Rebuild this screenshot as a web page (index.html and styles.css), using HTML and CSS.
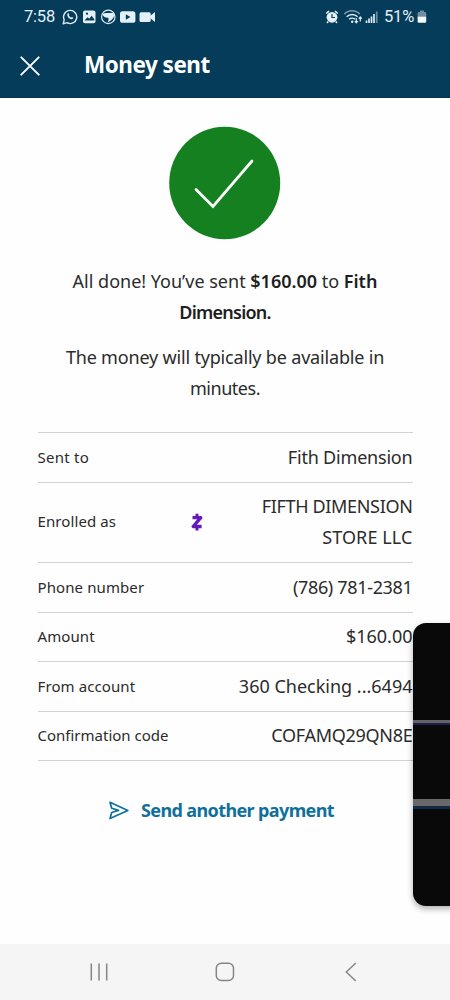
FILE: index.html
```
<!DOCTYPE html>
<html lang="en">
<head>
<meta charset="utf-8">
<title>Money sent</title>
<link rel="stylesheet" href="styles.css">
</head>
<body>
<div class="screen">
  <header class="top">
    <div class="status">
      <span class="clock">7:58</span>
      <svg class="notif" width="96" height="18" viewBox="0 0 96 18" fill="none">
        <path d="M1.200 15.800 2.200 11.800A6.600 6.600 0 1 1 4.900 14.700Z" stroke="#dcebf3" stroke-width="1.400" stroke-linejoin="round"/>
        <path d="M5.600 5.600c.7-.9 1.300-.4 1.700.9-.6 1-.3 1.300.6 2.200s1.300 1 2.100.4c1.400.5 1.600 1 .8 1.700-2.600 1.700-6.800-2.500-5.200-5.200Z" fill="#dcebf3"/>
        <rect x="21" y="2.500" width="12.500" height="12.700" rx="2" fill="#e4f0f7"/>
        <path d="m22.500 12.500 3-3.300 1.800 1.500 2.300-3 2.700 3.600v1.200Z" fill="#043c5a"/>
        <circle cx="25" cy="5.700" r="1.100" fill="#043c5a"/>
        <circle cx="46.300" cy="8.900" r="6.700" stroke="#dcebf3" stroke-width="1.200"/>
        <path d="M40.300 6c2.500-1.500 6.500-.5 11.200-1.200l.8 3c-1 3-3 4.500-6.700 6.700.7-2 1.600-3.500.6-4.700-2.400.3-4.700-.8-5.900-3.800Z" fill="#e4f0f7"/>
        <rect x="58" y="3.200" width="15.400" height="11.600" rx="2.600" fill="#e4f0f7"/>
        <path d="m63.800 6.300 4.600 2.700-4.600 2.700Z" fill="#043c5a"/>
        <rect x="77.500" y="4.200" width="11.200" height="9.800" rx="1.500" fill="#e4f0f7"/>
        <path d="m88 8 5-4v10L88 10Z" fill="#e4f0f7"/>
      </svg>
      <svg class="signals" width="54" height="18" viewBox="0 0 54 18" fill="none">
        <circle cx="7" cy="9.300" r="5.400" fill="#e4f0f7"/>
        <path d="M1.300 5.500 4 3M12.700 5.500 10 3M3.200 13.500 2 14.800M10.800 13.500l1.200 1.300" stroke="#e4f0f7" stroke-width="1.700"/>
        <path d="M7 6v3.500h3" stroke="#043c5a" stroke-width="1.200"/>
        <path d="M19.300 6a10.700 10.700 0 0 1 15.500 0" stroke="#7f9cad" stroke-width="1.400"/>
        <path d="M21.700 8.700a7.600 7.600 0 0 1 10.900 0M24.200 11.300a4.200 4.200 0 0 1 5.800 0" stroke="#dcebf3" stroke-width="1.500"/>
        <circle cx="27.200" cy="13.700" r="1.200" fill="#e4f0f7"/>
        <path d="M31.300 10v4.800m-1.500-1.600 1.500 1.600 1.500-1.600M35.300 13.500V9m-1.500 1.600 1.500-1.600 1.500 1.600" stroke="#dcebf3" stroke-width="1.200"/>
        <path d="M41.500 15v-2.500M44 15v-4.500M46.500 15V8.500M49 15V6" stroke="#dcebf3" stroke-width="1.700"/>
        <path d="M51.700 15V3.500" stroke="#6d8d9f" stroke-width="1.700"/>
      </svg>
      <span class="percent">51%</span>
      <svg class="battery" width="10" height="14" viewBox="0 0 10 14">
        <path d="M3 1.200Q3 .6 3.600.6h2.800q.6 0 .6.600V2h1q1.200 0 1.200 1.200v3.400H.6V3.200Q.6 2 1.800 2H3Z" fill="#6f8fa1"/>
        <path d="M.6 6.600h8.600v5q0 1.200-1.200 1.200H1.800Q.6 12.800.6 11.600Z" fill="#f2f8fb"/>
      </svg>
    </div>
    <div class="titlebar">
      <svg class="close" width="20" height="20" viewBox="0 0 20 20"><path d="m1.300 1.300 17.400 17.400M18.700 1.300 1.300 18.700" stroke="#fff" stroke-width="1.900" stroke-linecap="round"/></svg>
      <h1 class="title">Money sent</h1>
    </div>
  </header>
  <main class="content">
    <svg class="success" width="112" height="114" viewBox="0 0 112 114" fill="none">
      <ellipse cx="55.700" cy="57" rx="55.500" ry="56.300" fill="#14801f"/>
      <path d="M27 63.500 44 80.500 83 35" stroke="#fff" stroke-width="2.700" stroke-linecap="round"/>
    </svg>
    <p class="message"><span class="l1">All done! You’ve sent <b>$160.00</b> to <b>Fith</b></span><br><b class="l2">Dimension.</b></p>
    <p class="message note"><span class="l3">The money will typically be available in</span><br><span class="l4">minutes.</span></p>
    <dl class="details">
      <div class="row first"><dt class="k1">Sent to</dt><dd class="v1">Fith Dimension</dd></div>
      <div class="row tall"><dt>Enrolled as</dt>
        <svg class="zelle" width="12" height="18" viewBox="0 0 12 18" fill="none" stroke="#6518bd"><path d="M1.500 4.700h8.300L2.200 13.500h8.400" stroke-width="3.300" stroke-linejoin="round"/><path d="M6 .7v4M6 13.500v4" stroke-width="3"/></svg>
        <dd><span class="v2">FIFTH DIMENSION</span><br><span class="v3">STORE LLC</span></dd></div>
      <div class="row"><dt>Phone number</dt><dd class="v4">(786) 781-2381</dd></div>
      <div class="row"><dt>Amount</dt><dd>$160.00</dd></div>
      <div class="row"><dt>From account</dt><dd>360 Checking ...6494</dd></div>
      <div class="row"><dt class="k6">Confirmation code</dt><dd class="v7">COFAMQ29QN8E</dd></div>
    </dl>
    <div class="again">
      <svg width="20" height="19" viewBox="0 0 20 19" fill="none" stroke="#10709c" stroke-width="1.700" stroke-linejoin="round" stroke-linecap="round"><path d="M1 1.300 18.800 9.400 1 17.500 2.700 11.500 9.500 9.400 2.700 7.300Z"/></svg>
      <span class="again-label">Send another payment</span>
    </div>
  </main>
  <nav class="nav">
    <svg width="18" height="18" viewBox="0 0 18 18" stroke="#858585" stroke-width="1.500"><path d="M1.300.5v17M9 .5v17M16.700.5v17"/></svg>
    <svg class="home" width="20" height="20" viewBox="0 0 20 20" fill="none" stroke="#858585" stroke-width="1.500"><rect x="1.300" y="1.300" width="17.200" height="17.200" rx="5"/></svg>
    <svg width="12" height="20" viewBox="0 0 12 20" fill="none" stroke="#858585" stroke-width="1.500"><path d="M10.800 1 1.300 10l9.500 9"/></svg>
  </nav>
  <aside class="edge-panel">
    <div class="stripe"></div>
    <div class="stripe second"></div>
  </aside>
</div>
</body>
</html>
```
FILE: styles.css
```
* { box-sizing: border-box; margin: 0; padding: 0; }
body { background: #fefefe; }
svg { display: block; flex: none; }
.screen {
  position: relative;
  width: 450px;
  height: 1000px;
  overflow: hidden;
  display: flex;
  flex-direction: column;
  background: #fefefe;
  color: #2b2b2b;
  font-family: "Noto Sans", sans-serif;
}
.top { height: 98px; background: #043c5a; border-bottom: 1px solid #0a2f47; }
.status {
  display: flex;
  align-items: center;
  height: 33px;
  padding: 0 23px 0 24px;
  color: #e4f0f7;
  font: 16.500px/33px Roboto, sans-serif;
  letter-spacing: -0.2px;
}
.clock { width: 38px; }
.signals { margin-left: auto; }
.percent { margin-left: 5px; width: 32px; }
.battery { margin-left: 1px; }
.titlebar { display: flex; align-items: center; height: 64px; padding: 0 20px; }
.close { margin-top: 2px; }
.title { margin: -1px 0 0 44px; color: #fff; font-size: 22.500px; line-height: 30px; font-weight: 700; letter-spacing: -0.5px; white-space: nowrap; }
.content { flex: 1; display: flex; flex-direction: column; align-items: center; padding: 28px 38px 0; }
.message { margin-top: 26px; text-align: center; font-size: 18px; line-height: 31px; white-space: nowrap; }
.message b { font-weight: 600; color: #1e1e1e; }
.message .l2 { font-weight: 600; letter-spacing: -0.75px; }
.l3 { letter-spacing: -0.18px; }
.l4 { letter-spacing: -0.45px; }
.note { margin-top: 14px; }
.details { width: 375px; margin-top: 28px; border-top: 1px solid #d2d2d2; }
.row { display: flex; align-items: center; height: 49.500px; border-bottom: 1px solid #d2d2d2; white-space: nowrap; }
.row.first { height: 50px; padding-bottom: 1px; }
.row.tall { height: 80px; padding-bottom: 2px; }
dt { width: 153px; padding-bottom: 1px; font-size: 15px; letter-spacing: 0.1px; }
.k1 { letter-spacing: 0.25px; }
.k6 { letter-spacing: 0; }
dd { margin-left: auto; text-align: right; font-size: 18px; line-height: 31px; }
.v1 { letter-spacing: -0.2px; }
.v2 { letter-spacing: -0.33px; }
.v3 { letter-spacing: 0.1px; }
.v4 { letter-spacing: -0.33px; }
.v7 { letter-spacing: -0.28px; }
.again { display: flex; align-items: center; gap: 12px; margin: 34px 0 0 -7px; color: #10709c; font-size: 18px; line-height: 31px; font-weight: 700; white-space: nowrap; }
.again-label { width: 193px; letter-spacing: -0.62px; }
.nav { height: 56px; display: flex; align-items: center; justify-content: space-between; padding: 0 93px 0 90px; background: #f5f5f5; }
.home { margin-left: -4px; }
.edge-panel {
  position: absolute;
  left: 413px;
  top: 623px;
  width: 50px;
  height: 283px;
  padding-top: 97px;
  border-radius: 13px;
  overflow: hidden;
  background: #090909;
  box-shadow: 0 3px 6px rgba(0, 0, 0, 0.3);
}
.stripe { height: 5px; background: #626267; border-bottom: 2px solid #20204e; }
.stripe.second { margin-top: 74px; height: 10px; background: #686868; border-bottom: 3px solid #132947; }
```
